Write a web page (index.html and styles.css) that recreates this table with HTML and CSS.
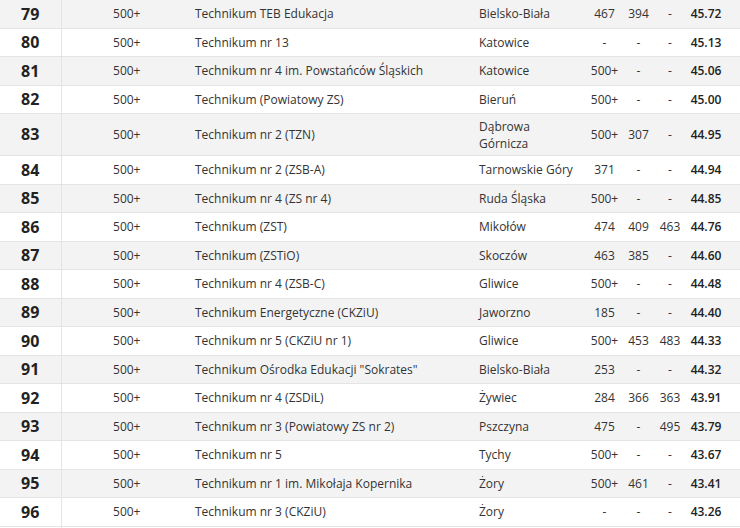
FILE: index.html
```html
<!DOCTYPE html>
<html lang="pl">
<head>
<meta charset="utf-8">
<title>Ranking techników</title>
<link rel="stylesheet" href="styles.css">
</head>
<body>
<table class="ranking">
  <colgroup>
    <col class="c-rank"><col class="c-pos"><col class="c-name"><col class="c-city">
    <col class="c-n1"><col class="c-n2"><col class="c-n3"><col class="c-score">
  </colgroup>
  <tbody>
    <tr><td class="rank">79</td><td class="pos">500+</td><td class="name">Technikum TEB Edukacja</td><td class="city">Bielsko-Biała</td><td class="num">467</td><td class="num">394</td><td class="num">-</td><td class="score">45.72</td></tr>
    <tr><td class="rank">80</td><td class="pos">500+</td><td class="name">Technikum nr 13</td><td class="city">Katowice</td><td class="num">-</td><td class="num">-</td><td class="num">-</td><td class="score">45.13</td></tr>
    <tr><td class="rank">81</td><td class="pos">500+</td><td class="name">Technikum nr 4 im. Powstańców Śląskich</td><td class="city">Katowice</td><td class="num">500+</td><td class="num">-</td><td class="num">-</td><td class="score">45.06</td></tr>
    <tr><td class="rank">82</td><td class="pos">500+</td><td class="name">Technikum (Powiatowy ZS)</td><td class="city">Bieruń</td><td class="num">500+</td><td class="num">-</td><td class="num">-</td><td class="score">45.00</td></tr>
    <tr><td class="rank">83</td><td class="pos">500+</td><td class="name">Technikum nr 2 (TZN)</td><td class="city">Dąbrowa Górnicza</td><td class="num">500+</td><td class="num">307</td><td class="num">-</td><td class="score">44.95</td></tr>
    <tr><td class="rank">84</td><td class="pos">500+</td><td class="name">Technikum nr 2 (ZSB-A)</td><td class="city">Tarnowskie Góry</td><td class="num">371</td><td class="num">-</td><td class="num">-</td><td class="score">44.94</td></tr>
    <tr><td class="rank">85</td><td class="pos">500+</td><td class="name">Technikum nr 4 (ZS nr 4)</td><td class="city">Ruda Śląska</td><td class="num">500+</td><td class="num">-</td><td class="num">-</td><td class="score">44.85</td></tr>
    <tr><td class="rank">86</td><td class="pos">500+</td><td class="name">Technikum (ZST)</td><td class="city">Mikołów</td><td class="num">474</td><td class="num">409</td><td class="num">463</td><td class="score">44.76</td></tr>
    <tr><td class="rank">87</td><td class="pos">500+</td><td class="name">Technikum (ZSTiO)</td><td class="city">Skoczów</td><td class="num">463</td><td class="num">385</td><td class="num">-</td><td class="score">44.60</td></tr>
    <tr><td class="rank">88</td><td class="pos">500+</td><td class="name">Technikum nr 4 (ZSB-C)</td><td class="city">Gliwice</td><td class="num">500+</td><td class="num">-</td><td class="num">-</td><td class="score">44.48</td></tr>
    <tr><td class="rank">89</td><td class="pos">500+</td><td class="name">Technikum Energetyczne (CKZiU)</td><td class="city">Jaworzno</td><td class="num">185</td><td class="num">-</td><td class="num">-</td><td class="score">44.40</td></tr>
    <tr><td class="rank">90</td><td class="pos">500+</td><td class="name">Technikum nr 5 (CKZiU nr 1)</td><td class="city">Gliwice</td><td class="num">500+</td><td class="num">453</td><td class="num">483</td><td class="score">44.33</td></tr>
    <tr><td class="rank">91</td><td class="pos">500+</td><td class="name">Technikum Ośrodka Edukacji "Sokrates"</td><td class="city">Bielsko-Biała</td><td class="num">253</td><td class="num">-</td><td class="num">-</td><td class="score">44.32</td></tr>
    <tr><td class="rank">92</td><td class="pos">500+</td><td class="name">Technikum nr 4 (ZSDiL)</td><td class="city">Żywiec</td><td class="num">284</td><td class="num">366</td><td class="num">363</td><td class="score">43.91</td></tr>
    <tr><td class="rank">93</td><td class="pos">500+</td><td class="name">Technikum nr 3 (Powiatowy ZS nr 2)</td><td class="city">Pszczyna</td><td class="num">475</td><td class="num">-</td><td class="num">495</td><td class="score">43.79</td></tr>
    <tr><td class="rank">94</td><td class="pos">500+</td><td class="name">Technikum nr 5</td><td class="city">Tychy</td><td class="num">500+</td><td class="num">-</td><td class="num">-</td><td class="score">43.67</td></tr>
    <tr><td class="rank">95</td><td class="pos">500+</td><td class="name">Technikum nr 1 im. Mikołaja Kopernika</td><td class="city">Żory</td><td class="num">500+</td><td class="num">461</td><td class="num">-</td><td class="score">43.41</td></tr>
    <tr><td class="rank">96</td><td class="pos">500+</td><td class="name">Technikum nr 3 (CKZiU)</td><td class="city">Żory</td><td class="num">-</td><td class="num">-</td><td class="num">-</td><td class="score">43.26</td></tr>
    <tr class="cut"><td class="rank">&nbsp;</td><td></td><td></td><td></td><td></td><td></td><td></td><td></td></tr>
  </tbody>
</table>
</body>
</html>
```

FILE: styles.css
```css
html, body {
  margin: 0;
  padding: 0;
  background: #ffffff;
}

body {
  font-family: "Open Sans", "Liberation Sans", sans-serif;
  font-size: 12px;
  color: #333333;
  overflow: hidden;
}

.ranking {
  width: 740px;
  margin-top: -1px;
  border-collapse: collapse;
  table-layout: fixed;
}

.c-rank { width: 61px; }
.c-pos { width: 131px; }
.c-name { width: 284px; }
.c-city { width: 114px; }
.c-n1 { width: 29px; }
.c-n2 { width: 39px; }
.c-n3 { width: 24px; }
.c-score { width: 58px; }

.ranking td {
  border-top: 1px solid #e4e4e4;
  padding: 3.5px 0;
  line-height: 17px;
  vertical-align: middle;
  text-align: center;
}

.ranking tr:nth-child(odd) td {
  background: #f3f3f3;
}

.ranking tr.cut td {
  background: #ffffff;
}

.ranking td.rank {
  font-size: 16px;
  font-weight: 700;
  line-height: 20.5px;
  color: #222222;
  border-right: 1px solid #e4e4e4;
}

.ranking td.name {
  text-align: left;
  padding-left: 3px;
}

.ranking td.city {
  text-align: left;
  padding-left: 3px;
  padding-right: 15px;
}

.ranking td.score {
  font-weight: 600;
  color: #222222;
  padding-right: 10px;
}
```
